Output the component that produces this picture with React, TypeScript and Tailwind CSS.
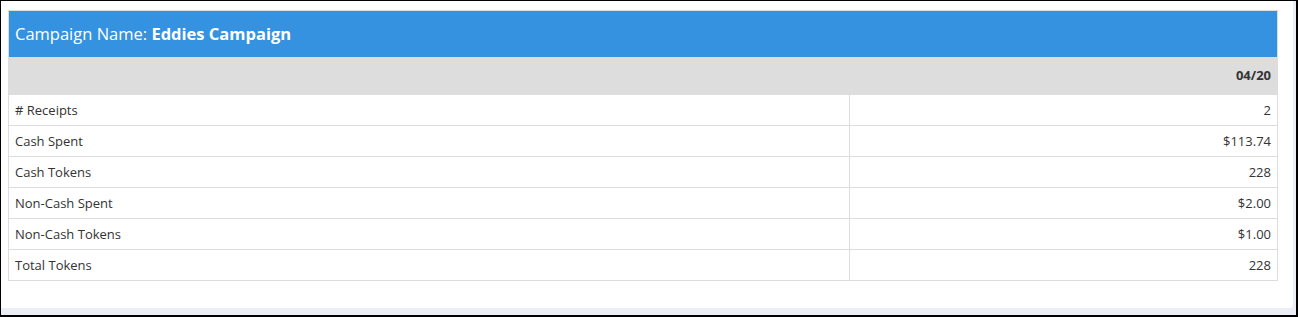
const rows = [
  { label: "# Receipts", value: "2" },
  { label: "Cash Spent", value: "$113.74" },
  { label: "Cash Tokens", value: "228" },
  { label: "Non-Cash Spent", value: "$2.00" },
  { label: "Non-Cash Tokens", value: "$1.00" },
  { label: "Total Tokens", value: "228" },
];

export default function App() {
  return (
    <div
      className="h-[317px] w-[1298px] overflow-hidden border-t border-l border-r-2 border-b-2 border-black bg-[#eceef5]"
      style={{ fontFamily: '"Open Sans", "Liberation Sans", sans-serif' }}
    >
      <div className="h-[307px] w-[1292px] rounded-br-sm bg-white pt-[9px] pl-[7px]">
        <table className="w-[1270px] border-collapse border border-[#dddddd] text-[13px] text-[#333333]">
          <thead>
            <tr>
              <th
                colSpan={2}
                className="h-[46px] bg-[#3592e0] px-[6px] pt-px text-left text-[16.5px] font-normal text-white"
              >
                Campaign Name: <span className="font-bold">Eddies Campaign</span>
              </th>
            </tr>
            <tr>
              <th
                colSpan={2}
                className="h-[38px] bg-[#dddddd] px-[6px] text-right font-bold"
              >
                04/20
              </th>
            </tr>
          </thead>
          <tbody>
            {rows.map((row) => (
              <tr key={row.label} className="h-[31px] border-t border-[#dddddd]">
                <td className="w-[841px] border-r border-[#dddddd] px-[6px] pt-px">
                  {row.label}
                </td>
                <td className="px-[6px] pt-px text-right">{row.value}</td>
              </tr>
            ))}
          </tbody>
        </table>
      </div>
    </div>
  );
}
